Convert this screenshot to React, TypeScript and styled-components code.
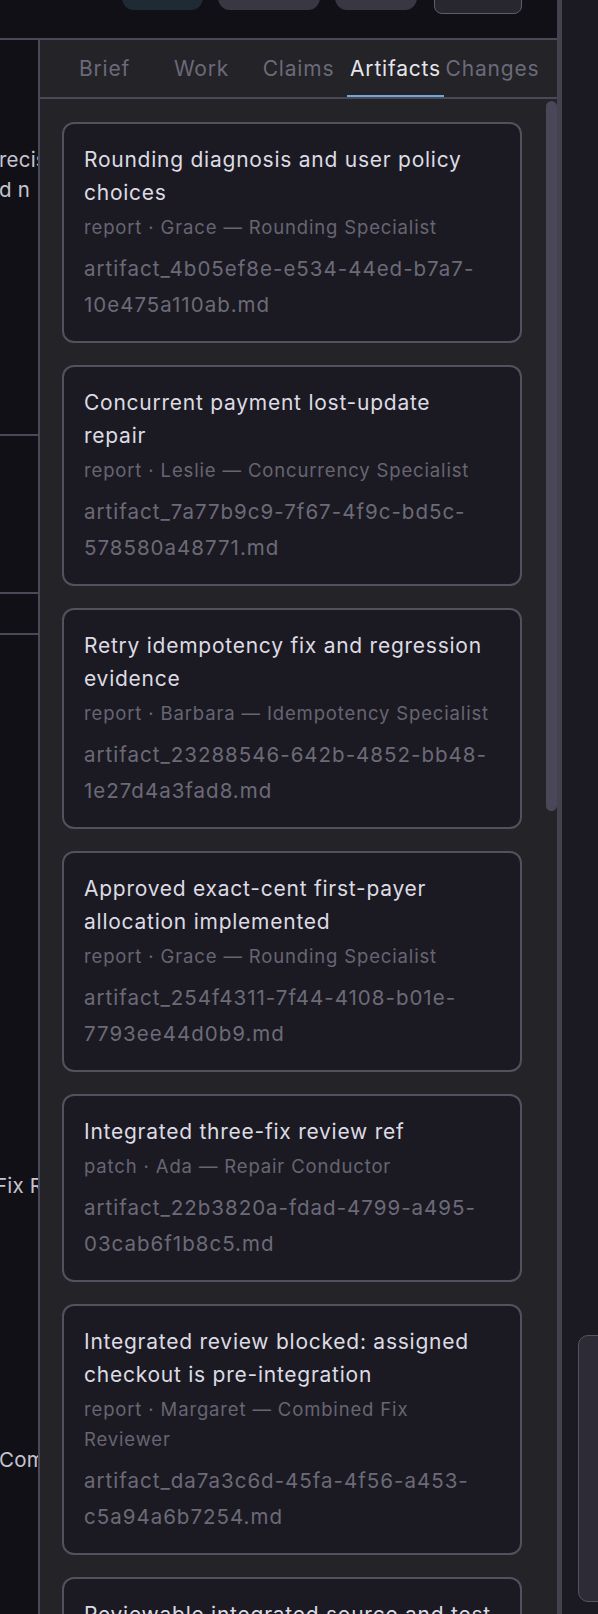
import React from 'react';
import styled, { createGlobalStyle } from 'styled-components';

// Artifact list shown in the side panel
interface Artifact {
  title: string;
  kind: string;
  author: string;
  file: string;
}

const artifacts: Artifact[] = [
  {
    title: 'Rounding diagnosis and user policy choices',
    kind: 'report',
    author: 'Grace — Rounding Specialist',
    file: 'artifact_4b05ef8e-e534-44ed-b7a7-10e475a110ab.md',
  },
  {
    title: 'Concurrent payment lost-update repair',
    kind: 'report',
    author: 'Leslie — Concurrency Specialist',
    file: 'artifact_7a77b9c9-7f67-4f9c-bd5c-578580a48771.md',
  },
  {
    title: 'Retry idempotency fix and regression evidence',
    kind: 'report',
    author: 'Barbara — Idempotency Specialist',
    file: 'artifact_23288546-642b-4852-bb48-1e27d4a3fad8.md',
  },
  {
    title: 'Approved exact-cent first-payer allocation implemented',
    kind: 'report',
    author: 'Grace — Rounding Specialist',
    file: 'artifact_254f4311-7f44-4108-b01e-7793ee44d0b9.md',
  },
  {
    title: 'Integrated three-fix review ref',
    kind: 'patch',
    author: 'Ada — Repair Conductor',
    file: 'artifact_22b3820a-fdad-4799-a495-03cab6f1b8c5.md',
  },
  {
    title: 'Integrated review blocked: assigned checkout is pre-integration',
    kind: 'report',
    author: 'Margaret — Combined Fix Reviewer',
    file: 'artifact_da7a3c6d-45fa-4f56-a453-c5a94a6b7254.md',
  },
  {
    title: 'Reviewable integrated source and test evidence',
    kind: 'patch',
    author: 'Ada — Repair Conductor',
    file: 'artifact_8c41d2e7-3b90-4e15-9a6f-2d7c1b84e093.md',
  },
];

const tabs = ['Brief', 'Work', 'Claims', 'Artifacts', 'Changes'];

const GlobalStyle = createGlobalStyle`
  html, body {
    margin: 0;
    padding: 0;
    background: #111017;
  }
  body {
    font-family: Inter, "Noto Sans", sans-serif;
    -webkit-font-smoothing: antialiased;
  }
  * {
    box-sizing: border-box;
  }
`;

const Shell = styled.div`
  display: flex;
  height: 100vh;
  overflow: hidden;
`;

const Workspace = styled.div`
  flex: 1;
  min-width: 0;
  display: flex;
  flex-direction: column;
  background: #111017;
`;

const TopBar = styled.header`
  height: 40px;
  flex-shrink: 0;
  display: flex;
  align-items: flex-end;
  gap: 15px;
  padding-left: 122px;
  border-bottom: 2px solid #4a4957;
  overflow: hidden;
`;

const Pill = styled.div<{ $width: number; $tone: string }>`
  width: ${p => p.$width}px;
  height: 36px;
  margin-bottom: 28px;
  border-radius: 12px;
  background: ${p => p.$tone};
  flex-shrink: 0;
`;

const GhostButton = styled.div`
  width: 88px;
  height: 36px;
  margin-left: 2px;
  margin-bottom: 24px;
  border-radius: 8px;
  border: 1.5px solid #5e5d69;
  background: #28272e;
  flex-shrink: 0;
`;

const Body = styled.div`
  flex: 1;
  min-height: 0;
  display: flex;
`;

const SideColumn = styled.aside`
  width: 40px;
  flex-shrink: 0;
  display: flex;
  flex-direction: column;
  border-right: 2px solid #4a4957;
  overflow: hidden;
`;

const SideSection = styled.div<{ $height?: number; $padTop?: number }>`
  ${p => (p.$height ? `height: ${p.$height}px; flex-shrink: 0;` : 'flex: 1;')}
  padding-top: ${p => p.$padTop ?? 0}px;
  border-bottom: ${p => (p.$height ? '2px solid #4a4957' : 'none')};
`;

const SideLine = styled.div<{ $gap?: number; $shift?: number }>`
  margin-top: ${p => p.$gap ?? 0}px;
  margin-left: ${p => p.$shift ?? -1}px;
  font-size: 20.5px;
  letter-spacing: 0.2px;
  line-height: 30px;
  color: #c6c4ce;
  white-space: nowrap;
`;

const Panel = styled.section`
  width: 517px;
  flex-shrink: 0;
  display: flex;
  flex-direction: column;
  background: #232328;
  min-height: 0;
`;

const TabBar = styled.nav`
  height: 59px;
  flex-shrink: 0;
  display: flex;
  padding: 0 16px;
  border-bottom: 2px solid #4a4957;
`;

const Tab = styled.div<{ $active?: boolean }>`
  flex: 1;
  display: flex;
  align-items: center;
  justify-content: center;
  padding-top: 2px;
  font-size: 21px;
  letter-spacing: 0.8px;
  white-space: nowrap;
  color: ${p => (p.$active ? '#e7e5ed' : '#6c6a79')};
  border-bottom: 2px solid ${p => (p.$active ? '#6ea7d9' : 'transparent')};
`;

const ListArea = styled.div`
  flex: 1;
  min-height: 0;
  display: flex;
`;

const ArtifactList = styled.div`
  flex: 1;
  min-width: 0;
  overflow: hidden;
  display: flex;
  flex-direction: column;
  gap: 22px;
  padding: 22.5px 24px 24px 22px;
`;

const ScrollRail = styled.div`
  width: 11px;
  flex-shrink: 0;
  padding-top: 2px;
`;

const ScrollThumb = styled.div`
  height: 710px;
  border-radius: 6px;
  background: #4a4858;
`;

const Card = styled.article`
  flex-shrink: 0;
  background: #1b1a22;
  border: 2px solid #52515d;
  border-radius: 12px;
  padding: 19px 25px 17.5px 20px;
`;

const CardTitle = styled.div`
  font-size: 21px;
  letter-spacing: 0.75px;
  line-height: 33px;
  color: #dddbe4;
`;

const CardMeta = styled.div`
  margin-top: 3px;
  font-size: 18.5px;
  letter-spacing: 0.85px;
  line-height: 30px;
  color: #676573;
`;

const CardFile = styled.div`
  margin-top: 9.5px;
  font-size: 20.5px;
  letter-spacing: 1px;
  line-height: 36px;
  color: #6c6a78;
`;

const Divider = styled.div`
  width: 5px;
  flex-shrink: 0;
  background: #43424e;
`;

const RightPane = styled.aside`
  width: 36px;
  flex-shrink: 0;
  display: flex;
  flex-direction: column;
  justify-content: flex-end;
  padding: 0 0 12px 16px;
  background: #1b1a22;
`;

const Composer = styled.div`
  width: 40px;
  height: 267px;
  border: 1.5px solid #56555f;
  border-radius: 10px;
  background: #2d2c36;
`;

const App: React.FC = () => {
  return (
    <>
      <GlobalStyle />
      <Shell>
        <Workspace>
          <TopBar>
            <Pill $width={81} $tone="#1e2a34" />
            <Pill $width={102} $tone="#393842" />
            <Pill $width={82} $tone="#393842" />
            <GhostButton />
          </TopBar>
          <Body>
            <SideColumn>
              <SideSection $height={396} $padTop={105}>
                <SideLine>recision</SideLine>
                <SideLine>d n</SideLine>
              </SideSection>
              <SideSection $height={158} />
              <SideSection $height={41} />
              <SideSection $padTop={536}>
                <SideLine $shift={-5}>Fix Review</SideLine>
                <SideLine $gap={244}>Combined</SideLine>
              </SideSection>
            </SideColumn>
            <Panel>
              <TabBar>
                {tabs.map(tab => (
                  <Tab key={tab} $active={tab === 'Artifacts'}>
                    {tab}
                  </Tab>
                ))}
              </TabBar>
              <ListArea>
                <ArtifactList>
                  {artifacts.map(item => (
                    <Card key={item.file}>
                      <CardTitle>{item.title}</CardTitle>
                      <CardMeta>
                        {item.kind} · {item.author}
                      </CardMeta>
                      <CardFile>{item.file}</CardFile>
                    </Card>
                  ))}
                </ArtifactList>
                <ScrollRail>
                  <ScrollThumb />
                </ScrollRail>
              </ListArea>
            </Panel>
          </Body>
        </Workspace>
        <Divider />
        <RightPane>
          <Composer />
        </RightPane>
      </Shell>
    </>
  );
};

export default App;
